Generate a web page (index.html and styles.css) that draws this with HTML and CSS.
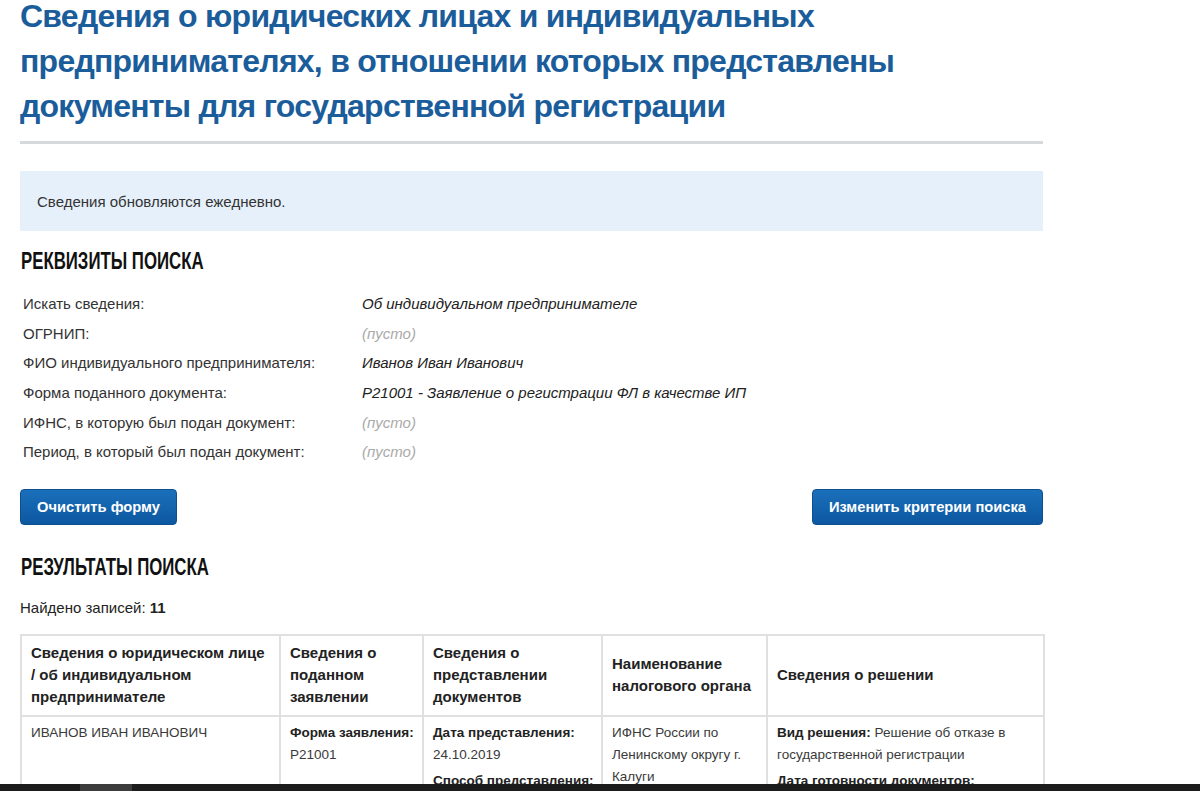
FILE: index.html
```html
<!DOCTYPE html>
<html lang="ru">
<head>
<meta charset="utf-8">
<title>Сведения о юридических лицах</title>
<link rel="stylesheet" href="styles.css">
</head>
<body>
<div class="page">
  <h1 class="title"><span class="tl">Сведения о юридических лицах и индивидуальных</span><span class="tl">предпринимателях, в отношении которых представлены</span><span class="tl">документы для государственной регистрации</span></h1>
  <div class="notice">Сведения обновляются ежедневно.</div>

  <h2 class="section"><span class="sq">РЕКВИЗИТЫ ПОИСКА</span></h2>
  <div class="props">
    <div class="label">Искать сведения:</div><div class="value">Об индивидуальном предпринимателе</div>
    <div class="label">ОГРНИП:</div><div class="value empty">(пусто)</div>
    <div class="label">ФИО индивидуального предпринимателя:</div><div class="value">Иванов Иван Иванович</div>
    <div class="label">Форма поданного документа:</div><div class="value">Р21001 - Заявление о регистрации ФЛ в качестве ИП</div>
    <div class="label">ИФНС, в которую был подан документ:</div><div class="value empty">(пусто)</div>
    <div class="label">Период, в который был подан документ:</div><div class="value empty">(пусто)</div>
  </div>

  <div class="actions">
    <button class="btn">Очистить форму</button>
    <button class="btn">Изменить критерии поиска</button>
  </div>

  <h2 class="section results"><span class="sq">РЕЗУЛЬТАТЫ ПОИСКА</span></h2>
  <div class="found">Найдено записей: <b>11</b></div>

  <table class="grid">
    <colgroup>
      <col class="c1"><col class="c2"><col class="c3"><col class="c4"><col class="c5">
    </colgroup>
    <thead>
      <tr>
        <th>Сведения о юридическом лице / об индивидуальном предпринимателе</th>
        <th>Сведения о поданном заявлении</th>
        <th>Сведения о представлении документов</th>
        <th>Наименование налогового органа</th>
        <th>Сведения о решении</th>
      </tr>
    </thead>
    <tbody>
      <tr>
        <td>ИВАНОВ ИВАН ИВАНОВИЧ</td>
        <td><b class="key">Форма заявления:</b><br>Р21001</td>
        <td><b class="key">Дата представления:</b><br>24.10.2019<div class="sub"><b class="key">Способ представления:</b></div></td>
        <td>ИФНС России по Ленинскому округу г. Калуги</td>
        <td><b class="key">Вид решения:</b> Решение об отказе в государственной регистрации<div class="sub"><b class="key">Дата готовности документов:</b></div></td>
      </tr>
    </tbody>
  </table>
</div>
<div class="taskbar"><span class="task"></span></div>
</body>
</html>
```

FILE: styles.css
```css
html, body {
  margin: 0;
  padding: 0;
  background: #ffffff;
  overflow: hidden;
}

body {
  font-family: "Liberation Sans", Arial, sans-serif;
  font-size: 15px;
  color: #222222;
}

.page {
  width: 1023px;
  margin-left: 20px;
}

.title {
  margin: -6px 0 0 0;
  padding: 0 0 12px 0;
  border-bottom: 3px solid #d6d9dc;
  font-family: "Liberation Sans", Arial, sans-serif;
  font-weight: bold;
  font-size: 32px;
  line-height: 45px;
  letter-spacing: -0.75px;
  color: #1b5d9b;
}

.tl {
  display: block;
  white-space: nowrap;
}

.notice {
  margin-top: 27px;
  height: 60px;
  display: flex;
  align-items: center;
  padding-left: 17px;
  background: #e6f0fa;
  color: #333333;
}

.section {
  margin: 16px 0 0 1px;
  font-family: "Liberation Sans", Arial, sans-serif;
  font-weight: bold;
  font-size: 24px;
  line-height: 28px;
  color: #111111;
}

.sq {
  display: inline-block;
  white-space: nowrap;
  transform: scaleX(0.7);
  transform-origin: left center;
}

.props {
  margin-top: 14px;
  display: grid;
  grid-template-columns: 339px 1fr;
  grid-auto-rows: 29.6px;
  padding-left: 3px;
  align-items: center;
}

.label {
  color: #333333;
}

.value {
  font-style: italic;
  color: #222222;
}

.value.empty {
  color: #aaaaaa;
}

.actions {
  margin-top: 22px;
  display: flex;
  justify-content: space-between;
}

.btn {
  height: 36px;
  padding: 0 16px;
  border: 1px solid #0d4f8f;
  border-radius: 4px;
  background: linear-gradient(#1b70bb, #0c57a0);
  color: #ffffff;
  font-family: "Liberation Sans", Arial, sans-serif;
  font-weight: bold;
  font-size: 14.7px;
  cursor: pointer;
}

.section.results {
  margin-top: 28px;
}

.found {
  margin-top: 18px;
  line-height: 18px;
  color: #222222;
}

.grid {
  margin-top: 17px;
  width: 1023px;
  border-collapse: collapse;
  table-layout: fixed;
}

.c1 { width: 259px; }
.c2 { width: 143px; }
.c3 { width: 179px; }
.c4 { width: 165px; }
.c5 { width: 277px; }

.grid th,
.grid td {
  border: 2px solid #e0e0e0;
  line-height: 22px;
  text-align: left;
}

.grid th {
  padding: 6px 8px 7px 9px;
  font-weight: bold;
  color: #222222;
  vertical-align: middle;
}

.grid td {
  padding: 5px 6px 8px 9px;
  font-size: 13.5px;
  vertical-align: top;
  color: #3a3a3a;
}

.grid td b {
  color: #222222;
}

.key {
  white-space: nowrap;
}

.sub {
  margin-top: 4px;
}

.taskbar {
  position: fixed;
  left: 0;
  right: 0;
  bottom: 0;
  height: 7px;
  background: #1c1c1c;
}

.task {
  position: absolute;
  left: 80px;
  top: 0;
  width: 52px;
  height: 7px;
  background: #3c3c3c;
}
```
